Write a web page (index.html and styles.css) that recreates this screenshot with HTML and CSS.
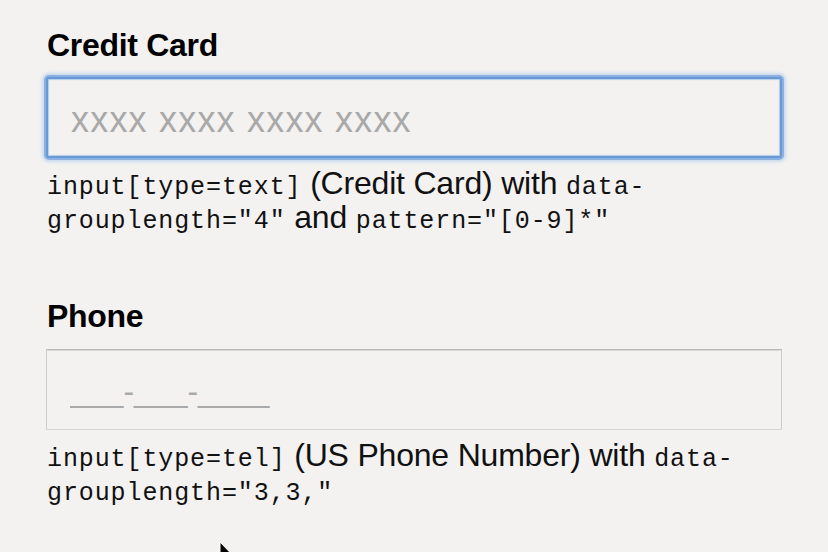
FILE: index.html
```html
<!DOCTYPE html>
<html lang="en">
<head>
<meta charset="utf-8">
<title>Grouped inputs</title>
<link rel="stylesheet" href="styles.css">
</head>
<body>
<main class="page">
  <section class="field field-card">
    <label class="field-label" for="cc">Credit Card</label>
    <input class="field-input is-focused" id="cc" type="text" placeholder="xxxx xxxx xxxx xxxx" data-grouplength="4" pattern="[0-9]*">
    <p class="field-desc"><code>input[type=text]</code> (Credit Card) with <code>data-<wbr>grouplength="4"</code> and <code>pattern="[0-9]*"</code></p>
  </section>
  <section class="field field-phone">
    <label class="field-label" for="tel">Phone</label>
    <input class="field-input phone-input" id="tel" type="tel" placeholder="___-___-____" data-grouplength="3,3,">
    <p class="field-desc"><code>input[type=tel]</code> (US Phone Number) with <code>data-<wbr>grouplength="3,3,"</code></p>
  </section>
  <svg class="cursor" width="14" height="20" viewBox="0 0 14 20" aria-hidden="true"><path d="M1 0 L1 17 L5 13 L8 20 L10.5 19 L7.5 12.5 L13 12.5 Z" fill="#000" stroke="#fff" stroke-width="1"/></svg>
</main>
</body>
</html>
```
FILE: styles.css
```css
html, body {
  margin: 0;
  padding: 0;
  background: #f3f2f1;
}

.page {
  position: relative;
  width: 828px;
  height: 552px;
  overflow: hidden;
  padding: 27px 0 0 46px;
  box-sizing: border-box;
  font-family: "Liberation Sans", Arial, sans-serif;
  color: #000;
}

.field {
  display: flex;
  flex-direction: column;
  width: 736px;
}

.field-phone {
  margin-top: 64px;
}

.field-label {
  font-size: 32px;
  font-weight: bold;
  line-height: 36px;
  letter-spacing: -0.3px;
  padding-left: 1px;
}

.field-input {
  box-sizing: border-box;
  width: 736px;
  height: 81px;
  margin: 14px 0 0 0;
  padding: 0 0 0 23px;
  background: #f3f2f1;
  font-family: "Liberation Sans", Arial, sans-serif;
  font-size: 31px;
  color: #000;
  outline: none;
}

.field-input::placeholder {
  color: #a9a9a9;
  opacity: 1;
}

.is-focused {
  border: 2px solid #6699d6;
  border-radius: 3px;
  box-shadow: 0 0 0 2px rgba(112, 160, 220, 0.7), 0 0 3px 4px rgba(160, 196, 238, 0.5), inset 0 0 1px 1px rgba(140, 180, 228, 0.6);
  font-size: 36px;
  padding-top: 4px;
}

.is-focused::placeholder {
  letter-spacing: 1.2px;
}

.phone-input {
  margin-top: 15px;
  border: 1px solid #cdcdcd;
  border-top-color: #b9b9b9;
  border-bottom-color: #d6d6d6;
  border-radius: 0;
  box-shadow: inset 0 1px 0 #d9d9d9;
  font-size: 32px;
  padding-top: 4px;
}

.field-desc {
  margin: 8px 0 0 1px;
  font-size: 32px;
  line-height: 34px;
  letter-spacing: -0.2px;
  color: #111;
}

.field-phone .field-desc {
  margin-top: 8px;
}

.field-desc code {
  font-family: "Liberation Mono", "Courier New", monospace;
  font-size: 25px;
  line-height: 1;
  letter-spacing: 0.9px;
}

.cursor {
  position: absolute;
  left: 219px;
  top: 542px;
}
```
